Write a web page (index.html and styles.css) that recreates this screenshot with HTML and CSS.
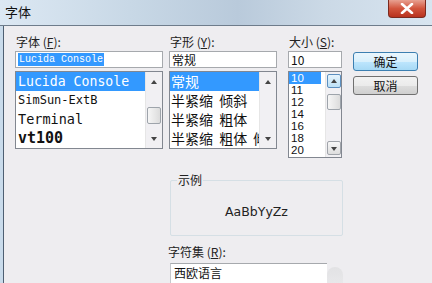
FILE: index.html
```html
<!DOCTYPE html>
<html>
  <head>
    <link rel="stylesheet" href="styles.css">
  </head>
  <body>
    <div class="window">
      <div class="title-bar">
        <span class="title">字体</span>
        <div class="close-button">
          <svg width="14" height="11" viewBox="0 0 14 11">
            <path d="M2 1 L12 10 M12 1 L2 10" stroke="#fff" stroke-width="2.6" stroke-linecap="round"/>
          </svg>
        </div>
      </div>
      <div class="frame">
        <div class="dialog">
          <div class="top-row">
            <div class="column font-column">
              <div class="label">字体 (<u>F</u>):</div>
              <div class="input"><span class="selected-text">Lucida Console</span></div>
              <div class="list">
                <div class="list-items">
                  <div class="font-item active">Lucida Console</div>
                  <div class="font-item narrow">SimSun-ExtB</div>
                  <div class="font-item tall">Terminal</div>
                  <div class="font-item bold">vt100</div>
                </div>
                <div class="scrollbar">
                  <div class="arrow up"></div>
                  <div class="thumb"></div>
                  <div class="arrow down"></div>
                </div>
              </div>
            </div>

            <div class="column style-column">
              <div class="label">字形 (<u>Y</u>):</div>
              <div class="input">常规</div>
              <div class="list">
                <div class="list-items">
                  <div class="style-item active">常规</div>
                  <div class="style-item">半紧缩 倾斜</div>
                  <div class="style-item">半紧缩 粗体</div>
                  <div class="style-item">半紧缩 粗体 倾斜</div>
                </div>
                <div class="scrollbar">
                  <div class="arrow up"></div>
                  <div class="arrow down"></div>
                </div>
              </div>
            </div>

            <div class="column size-column">
              <div class="label">大小 (<u>S</u>):</div>
              <div class="input">10</div>
              <div class="list">
                <div class="list-items">
                  <div class="size-item active">10</div>
                  <div class="size-item">11</div>
                  <div class="size-item">12</div>
                  <div class="size-item">14</div>
                  <div class="size-item">16</div>
                  <div class="size-item">18</div>
                  <div class="size-item">20</div>
                </div>
                <div class="scrollbar">
                  <div class="scroll-button hot"><div class="arrow up"></div></div>
                  <div class="thumb small"></div>
                  <div class="scroll-button"><div class="arrow down"></div></div>
                </div>
              </div>
            </div>

            <div class="buttons">
              <button class="btn default">确定</button>
              <button class="btn">取消</button>
            </div>
          </div>

          <div class="bottom-area">
            <div class="sample-group">
              <div class="group-label">示例</div>
              <div class="sample-text">AaBbYyZz</div>
            </div>
            <div class="label charset-label">字符集 (<u>R</u>):</div>
            <div class="charset-row">
              <div class="charset-select">西欧语言</div>
              <div class="charset-shadow"></div>
            </div>
          </div>
        </div>
      </div>
    </div>
  </body>
</html>
```

FILE: styles.css
```css
body {
  margin: 0;
  background-color: #eeedf0;
  font-family: "Noto Sans CJK SC", "Noto Sans", sans-serif;
  overflow: hidden;
}

.window {
  width: 432px;
  height: 283px;
  overflow: hidden;
}

.title-bar {
  height: 25px;
  display: flex;
  align-items: center;
  position: relative;
  background: linear-gradient(90deg, #dce8f3 0%, #c8d8e6 30%, #b9cadb 55%, #cbd9e6 75%, #d8e5f0 100%);
  border-bottom: 1px solid #6e7c8b;
}

.title {
  font-size: 13px;
  color: #111;
  margin-left: 5px;
  margin-top: -2px;
}

.close-button {
  position: absolute;
  top: 0;
  right: 6px;
  width: 36px;
  height: 17px;
  border-radius: 0 0 4px 4px;
  background: linear-gradient(#e8a191, #d2553d 50%, #b8321e);
  border: 1px solid #7b2a1f;
  border-top: none;
  display: flex;
  align-items: center;
  justify-content: center;
}

.frame {
  height: 257px;
  border-left: 3px solid #c9dbeb;
}

.dialog {
  height: 257px;
  border-left: 1px solid #4e5f72;
  padding: 8px 0 0 11px;
  box-sizing: border-box;
}

.top-row {
  display: flex;
  align-items: flex-start;
}

.column {
  display: flex;
  flex-direction: column;
}

.label {
  font-size: 12px;
  color: #222;
  height: 16px;
  line-height: 16px;
  margin-left: 1px;
}

.input {
  height: 15px;
  margin-top: 1px;
  border: 1px solid #a6a9ad;
  background: #fff;
  font-size: 12px;
  line-height: 15px;
  padding-left: 2px;
  color: #111;
  overflow: hidden;
}

.selected-text {
  font-family: "Liberation Mono", monospace;
  background: #3399ff;
  color: #fff;
  font-size: 10px;
  line-height: 13px;
  display: inline-block;
  padding: 0 1px;
  vertical-align: top;
  margin-top: 1px;
}

.list {
  margin-top: 3px;
  border: 1px solid #828790;
  background: #fff;
  display: flex;
  overflow: hidden;
}

.list-items {
  flex: 1;
  overflow: hidden;
  white-space: nowrap;
}

.scrollbar {
  width: 16px;
  background: #f1f0f3;
  display: flex;
  flex-direction: column;
  align-items: center;
  border-left: 1px solid #e6e6e6;
}

.arrow {
  width: 0;
  height: 0;
  border-left: 3px solid transparent;
  border-right: 3px solid transparent;
}

.arrow.up {
  border-bottom: 4px solid #444;
  margin-top: 8px;
}

.arrow.down {
  border-top: 4px solid #444;
  margin-top: auto;
  margin-bottom: 7px;
}

.thumb {
  width: 14px;
  height: 17px;
  margin-top: 23px;
  border: 1px solid #9ea4ab;
  border-radius: 2px;
  background: linear-gradient(90deg, #f6f6f6, #dcdcdc);
  box-sizing: border-box;
}

.font-column {
  width: 148px;
}

.font-column .list {
  height: 76px;
}

.font-item {
  font-family: "DejaVu Sans Mono", monospace;
  font-size: 13.2px;
  height: 19px;
  line-height: 19px;
  padding-left: 2px;
  color: #111;
}

.font-item.active {
  font-size: 13.2px;
}

.font-item.narrow {
  font-size: 12px;
}

.font-item.tall {
  font-size: 13.5px;
}

.font-item.bold {
  font-size: 15px;
  font-weight: bold;
}

.active {
  background: #3399ff;
  color: #fff;
}

.style-column {
  width: 108px;
  margin-left: 6px;
}

.style-column .list {
  height: 76px;
}

.style-item {
  font-size: 14px;
  height: 19px;
  line-height: 19px;
  padding-left: 1px;
  color: #111;
  word-spacing: 3px;
}

.style-item.active {
  color: #fff;
}

.size-column {
  width: 54px;
  margin-left: 11px;
}

.size-column .list {
  height: 85px;
}

.size-item {
  font-family: "Liberation Sans", sans-serif;
  font-size: 11.5px;
  height: 12px;
  line-height: 12px;
  padding-left: 2px;
  color: #111;
}

.size-item.active {
  width: 30px;
  color: #fff;
}

.size-column .scrollbar {
  padding: 2px 0;
  box-sizing: border-box;
}

.scroll-button {
  width: 14px;
  height: 14px;
  border: 1px solid #a0a4aa;
  border-radius: 2px;
  background: linear-gradient(#f7f7f7, #dedede);
  box-sizing: border-box;
  display: flex;
  justify-content: center;
}

.scroll-button.hot {
  border-color: #5c8fbf;
  background: linear-gradient(#e6f4fc, #bde1f6);
}

.scroll-button .arrow.up {
  margin-top: 4px;
}

.scroll-button .arrow.down {
  margin-top: 5px;
  margin-bottom: 0;
}

.size-column .scroll-button:last-child {
  margin-top: auto;
}

.thumb.small {
  margin-top: 6px;
  height: 16px;
}

.buttons {
  display: flex;
  flex-direction: column;
  margin-left: 11px;
  margin-top: 18px;
  gap: 5px;
}

.btn {
  width: 65px;
  height: 19px;
  font-family: "Noto Sans CJK SC", sans-serif;
  font-size: 12px;
  line-height: 15px;
  padding: 0;
  border: 1px solid #707070;
  border-radius: 3px;
  background: linear-gradient(#f2f2f2 0%, #ebebeb 50%, #dddddd 51%, #cfcfcf 100%);
  color: #111;
}

.btn.default {
  border-color: #3c7fb1;
  background: linear-gradient(#eaf6fd 0%, #d9f0fc 50%, #bee6fd 51%, #a7d9f5 100%);
}

.bottom-area {
  margin-left: 155px;
  width: 173px;
}

.sample-group {
  margin-top: 22px;
  height: 56px;
  box-sizing: border-box;
  border: 1px solid #d5dfe5;
  border-radius: 2px;
  position: relative;
  display: flex;
  align-items: center;
  justify-content: center;
}

.group-label {
  position: absolute;
  top: -9px;
  left: 6px;
  font-size: 12px;
  color: #222;
  background: #eeedf0;
  padding: 0 1px;
  line-height: 16px;
}

.sample-text {
  font-family: "DejaVu Sans", sans-serif;
  font-size: 12.5px;
  color: #222;
  margin-top: 6px;
}

.charset-label {
  margin-top: 8px;
  margin-left: -2px;
}

.charset-row {
  display: flex;
  align-items: flex-start;
  margin-top: 3px;
}

.charset-select {
  width: 158px;
  height: 20px;
  border-top: 1px solid #a6a9ad;
  border-left: 1px solid #c5c8cc;
  background: #fff;
  font-size: 12px;
  line-height: 18px;
  padding-left: 3px;
  box-sizing: border-box;
  color: #111;
}

.charset-shadow {
  width: 16px;
  height: 22px;
  margin-top: 4px;
  border-radius: 8px 8px 0 0;
  background: linear-gradient(#e2e2e4, #eaeaec);
}
```
